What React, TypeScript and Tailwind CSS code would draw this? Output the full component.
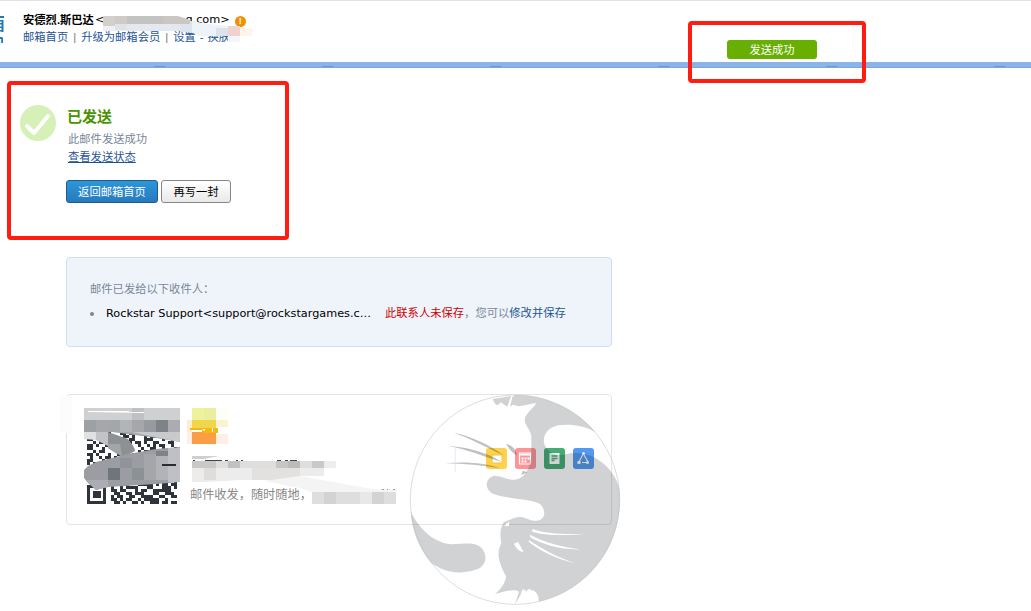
import { Mail } from 'lucide-react';

const QR_CELL = 3;

// rows of the code, 30 modules wide
const QR_ROWS = [
  '110100110111010110110101001011',
  '010110011010110011011010110100',
  '011011010110100110101100110101',
  '110010110011011010100110101101',
  '001101001101011001101011001011',
  '110110101100101101011010110110',
  '111100110001101100001001010100',
  '000110011000110100010110010001',
  '110001000010001100011100010011',
  '001011010011001011010011000110',
  '110100111001100001001010110010',
  '110001001100010000100110010001',
  '001011000011010001011001110010',
  '110100010010010110010110001010',
  '010010110100110010011001010110',
  '110001001101100101000110010101',
  '101101011010110100111001011011',
  '010110110101011011010110110110',
  '110101001001101100111001001101',
  '000000001100001101110011011001',
  '000000000011001100011101001100',
  '000000000110011110010000011011',
  '000000001100010011010111111001',
  '000000000111110001111101011011',
  '000000001001011110001100011101',
  '000000001101100010110011111100',
  '000000000110011011100011001110',
  '000000001011001100111100110011',
  '000000001101011001011111001000',
  '000000000110100110100111011011',
];

function Logo() {
  return (
    <svg className="mt-[4px]" width="5" height="29" viewBox="0 15 5 29" fill="#1e7bb8">
      <path d="M0 16h4v2H0zM0 20h3v1.500H0zM1.500 20h2v12h-2zM0 23h2v1.500H0zM0 26.500h2v1.500H0zM0 30h2v1.500H0z" />
      <path d="M0 37h1.500c1 0 1.500.8 1.500 2v4H1.200v-4H0z" />
    </svg>
  );
}

function HeaderMask() {
  return (
    <svg className="absolute left-[100px] top-[12px]" width="160" height="32" viewBox="100 12 160 32">
      <path d="M103 16h75l12 4v11h-87z" fill="#edf1f6" />
      <path d="M182 22l8-1 28 4 11 1v10h-30l-6-3-11-3z" fill="#edf3f8" />
      <g shapeRendering="crispEdges">
        <path d="M103 16h12v10h-12z" fill="#d3cfcb" />
        <path d="M115 16h12v10h-12z" fill="#cfcac7" />
        <path d="M127 16h36v8h-36z" fill="#c3c3c4" />
        <path d="M115 24h12v6h-12z" fill="#dfe2e6" />
        <path d="M127 24h53v7h-53z" fill="#e5e9ef" />
        <path d="M180 22h12v10h-12z" fill="#dce5ee" />
        <path d="M216 28h12v8h-12z" fill="#dce2ea" />
        <path d="M228 26h12v10h-12z" fill="#f0d3d1" />
        <path d="M228 36h12v6h-12z" fill="#f3f6fa" />
        <path d="M240 28h12v8h-12z" fill="#fff4e9" />
      </g>
      <path d="M163 16h15l12 4v4h-27z" fill="#cbc6c2" />
    </svg>
  );
}

function QrCode() {
  return (
    <svg className="shrink-0" width="96" height="98" viewBox="84 408 96 98">
      <g shapeRendering="crispEdges" fill="#2e333c">
        {QR_ROWS.map((row, y) =>
          row.split('').map((cell, x) =>
            cell === '1' ? (
              <rect key={`${x}-${y}`} x={87 + x * QR_CELL} y={414 + y * QR_CELL} width={QR_CELL} height={QR_CELL} />
            ) : null,
          ),
        )}
        <rect x="88.500" y="486.500" width="16" height="16" fill="none" stroke="#2e333c" strokeWidth="3" />
        <rect x="93" y="491" width="8" height="7" />
      </g>
      <path d="M84 408h96v34l-30-5-38-5-28 2z" fill="#a5a7ab" />
      <g shapeRendering="crispEdges">
        <path d="M84 408h96v12H84z" fill="#cfd0d2" />
        <path d="M132 408h12v12h-12z" fill="#c0c1c3" />
        <path d="M84 420h12v12H84z" fill="#9da0a4" />
        <path d="M108 420h12v12h-12z" fill="#a3a7aa" />
        <path d="M120 420h12v12h-12z" fill="#b2b5b6" />
        <path d="M144 420h12v12h-12z" fill="#979ba0" />
        <path d="M156 420h12v12h-12z" fill="#7e8387" />
        <path d="M168 420h12v12h-12z" fill="#aaacb2" />
      </g>
      <path d="M132 432h48v10l-30-6z" fill="#c9cacc" />
      <path d="M88 411h41v1h15v1l-56-1z" fill="#fff" />
      <path d="M84 432h12v8l-12-1z" fill="#e0e0e0" />
      <path d="M96 432h12v14l-12-6z" fill="#c2c3c5" />
      <path d="M108 432l20 7c4 5 7 9 7 12l-9 5-4 1-14-9z" fill="#8d9194" />
      <path d="M108 444h12l2 12-14-8z" fill="#a2a4a7" />
      <path d="M180 447v35l-24 2-48 3-12 3-8-7-4-5v-8l4-4 8-4 32-8 28-5z" fill="#9b9da2" />
      <g shapeRendering="crispEdges">
        <path d="M108 468h12v12h-12z" fill="#70757c" />
        <path d="M132 468h12v12h-12z" fill="#8c9196" />
        <path d="M120 458h12v10h-12z" fill="#909397" />
        <path d="M144 454h12v26h-12z" fill="#a4a6aa" />
        <path d="M156 456h12v24h-12z" fill="#b1b3b7" />
        <path d="M156 451h12v5h-12z" fill="#7f8388" />
        <path d="M168 448h12v34h-12z" fill="#bfc0c4" />
        <path d="M162 464h14v2h-14z" fill="#292c32" />
      </g>
      <path d="M86 480h22v7l-12 3z" fill="#acadb4" />
    </svg>
  );
}

function PromoMask() {
  return (
    <svg className="absolute left-[120px] top-[8px]" width="212" height="104" viewBox="187 403 212 104">
      <g shapeRendering="crispEdges">
        <path d="M192 408h12v12h-12z" fill="#eff19c" />
        <path d="M204 408h12v12h-12z" fill="#e9ef9e" />
        <path d="M216 408h12v12h-12z" fill="#fdfef5" />
        <path d="M187 420h5v12h-5z" fill="#fcefd0" />
        <path d="M192 420h24v9h-24z" fill="#f1d64b" />
        <path d="M216 420h12v7h-12z" fill="#faf3d2" />
        <path d="M187 432h5v12h-5z" fill="#fdefe4" />
        <path d="M192 432h24v12h-24z" fill="#fb9d46" />
        <path d="M216 434h12v10h-12z" fill="#fdefe4" />
      </g>
      <path d="M190 428h28v5h-16v-3h-12z" fill="#f4b90e" />
      <path d="M196 430h5l-1 2h-4zM202 429h4l-2 2zM212 428h1v4h-1z" fill="#fff" />
      <path d="M192 456h27l-15 3h-12z" fill="#cfcfcf" />
      <path d="M205 460.500h17M193 460.500h2M225 460.500h3M236 460.500h2M241 460.500h2M277 460.500h4M285 460.500h3M290 460.500h7" stroke="#444" strokeWidth="1" />
      <g shapeRendering="crispEdges">
        <path d="M192 461h144v7H192z" fill="#dedede" />
        <path d="M192 461h24v7h-24z" fill="#cbc9c8" />
        <path d="M228 461h12v7h-12z" fill="#c1c1c1" />
        <path d="M276 461h24v7h-24z" fill="#c7c5c5" />
        <path d="M288 461h12v7h-12z" fill="#bdb9b7" />
        <path d="M312 461h12v7h-12z" fill="#c8c9c9" />
        <path d="M324 461h12v7h-12z" fill="#ededef" />
      </g>
      <path d="M192 468h132v8h-24v4h-60l-36 2h-12z" fill="#ececec" />
      <g shapeRendering="crispEdges">
        <path d="M204 468h12v12h-12z" fill="#dedddc" />
        <path d="M252 468h48v12h-48z" fill="#e2e1e0" />
      </g>
      <path d="M300 476l72 13h24v3h-84l-12-4-36-7z" fill="#f4f4f4" />
      <g shapeRendering="crispEdges">
        <path d="M312 492h84v12h-84z" fill="#dedede" />
        <path d="M324 492h12v12h-12z" fill="#d4d3d4" />
        <path d="M360 492h12v12h-12z" fill="#e8e8e8" />
        <path d="M372 492h12v12h-12z" fill="#d4d2d4" />
      </g>
      <path d="M382 489.500h2M387 489.500h1M393 489.500h2" stroke="#8ba0b0" strokeWidth="1" />
    </svg>
  );
}

function AppIcons() {
  return (
    <div className="flex gap-[8px]">
      <span className="flex h-[21px] w-[21px] items-center justify-center rounded-[3px] bg-[#ffd24b]">
        <Mail className="h-[12px] w-[12px] text-white" fill="#fff" stroke="#f0c34b" />
      </span>
      <svg className="rounded-[3px] bg-[#ff9497]" width="21" height="21" viewBox="0 0 21 21">
        <path d="M4.5 5h11v11h-11z" fill="none" stroke="#fff" strokeWidth="1.2" />
        <path d="M4.5 6.5h11" stroke="#fff" strokeWidth="2" />
        <path d="M6.500 10.500h8M6.500 13.500h6" stroke="#fff" strokeWidth="1.8" strokeDasharray="2 1" />
      </svg>
      <svg className="rounded-[3px] bg-[#43ad74]" width="21" height="21" viewBox="0 0 21 21">
        <path d="M5.500 5h10v11h-10z" fill="#fff" />
        <path d="M7.500 8h6M7.500 10.500h6M7.500 12.500h3" stroke="#43ad74" strokeWidth="1.3" />
      </svg>
      <svg className="rounded-[3px] bg-[#529af0]" width="21" height="21" viewBox="0 0 21 21">
        <path d="M10 6L6 14M10.500 6l4.500 8M9 14.500h6" fill="none" stroke="#fff" strokeWidth="1.1" />
        <circle cx="10.500" cy="5.500" r="1.300" fill="#fff" />
        <circle cx="6" cy="14.500" r="1.800" fill="#fff" />
        <circle cx="14.500" cy="14.500" r="1.500" fill="#fff" />
      </svg>
    </div>
  );
}

function CatWatermark() {
  return (
    <svg className="pointer-events-none absolute left-[400px] top-[385px]" width="230" height="226" viewBox="0 0 690 678">
      <g fill="#171c24" fillOpacity="0.2">
        <path d="M345 30A314 314 0 0 1 587 142C553 120 505 116 475 121C438 128 423 161 436 184C447 206 476 216 500 207C574 190 646 248 659 315A314 314 0 0 1 416 650C418 627 402 614 395 616C384 608 384 613 380 621C371 608 364 614 363 627L345 659L357 620C339 610 310 621 285 627C304 612 318 590 318 574C285 513 296 494 304 474C298 445 302 426 312 411C332 404 345 395 365 396C388 402 400 413 421 404C439 395 434 371 421 358C400 341 330 344 281 327C252 314 254 279 283 272C306 272 324 287 345 284C378 281 391 244 394 211L394 154C390 129 370 119 375 100C379 85 394 75 410 54C378 58 364 68 339 59L330 65L337 36Z" />
        <path d="M278 42L333 33L322 65L302 52C291 69 284 57 278 42Z" />
        <path d="M32 380C56 426 92 470 154 478C198 477 225 469 247 491C266 519 255 548 222 556C170 571 128 558 94 534C58 491 36 440 32 380Z" />
      </g>
      <g fill="#171c24" fillOpacity="0.28">
        <path d="M161 143C213 153 270 180 311 211C265 190 214 161 161 143ZM145 183C208 186 273 208 305 231C254 215 197 192 145 183ZM137 235C198 229 262 235 300 250C247 242 193 235 137 235ZM318 177C335 180 348 193 351 211C334 203 327 189 318 177ZM368 257l14 5-18 8z" />
      </g>
      <g fill="#fff">
        <path d="M397 432C435 446 491 449 555 446C498 453 436 452 397 440ZM390 449C433 472 484 486 542 493C481 495 424 477 390 456ZM387 465C432 496 472 516 526 535C468 522 415 494 386 470ZM342 476l12-6 17 32c-14-3-23-12-29-26zM312 423l16-14-1 14z" />
      </g>
      <circle cx="345" cy="344" r="314" fill="none" stroke="#bfc1c3" strokeOpacity=".65" strokeWidth="2.500" />
      <path d="M166 183v78" stroke="#d9e6ef" strokeWidth="2" />
    </svg>
  );
}

export default function App() {
  return (
    <div className="relative h-[611px] w-[1031px] overflow-hidden bg-white font-['Liberation_Sans','Noto_Sans_CJK_SC',sans-serif] text-[11.3px] leading-[18px] text-[#798699]">
      {/* 页头 */}
      <header className="relative flex h-[62px] border-t border-[#e1e1e6] pt-[10px]">
        <div className="w-[23px]">
          <Logo />
        </div>
        <div>
          <div className="flex h-[18px] items-center whitespace-nowrap text-black">
            <b>安德烈.斯巴达</b>
            <span className="ml-px font-['DejaVu_Sans',sans-serif]">&lt;</span>
            <span className="ml-[81px] font-['DejaVu_Sans',sans-serif] text-[11.3px]">g.com&gt;</span>
            <span className="ml-[5px] mt-[2px] flex h-[11px] w-[11px] items-center justify-center rounded-full bg-[#f29100] text-[9px] font-bold text-white">!</span>
          </div>
          <nav className="flex h-[16px] items-center gap-[5px] whitespace-nowrap text-[#1e5494]">
            <span>邮箱首页</span>
            <span className="text-[#777]">|</span>
            <span>升级为邮箱会员</span>
            <span className="text-[#777]">|</span>
            <span className="flex gap-[4px]">
              <span>设置</span>
              <span>-</span>
              <span>换肤</span>
            </span>
          </nav>
        </div>
        <div className="absolute left-[727px] top-[39px] flex h-[19px] w-[90px] items-center justify-center rounded-[3px] bg-[#68af02] text-white">
          发送成功
        </div>
      </header>
      <div className="flex h-[6px] items-end gap-[157px] border-b border-[#7fa7de] bg-[#8ab4e8] pl-[154px]">
        {[0, 1, 2, 3, 4, 5].map((i) => (
          <span key={i} className="h-px w-[11px] shrink-0 bg-[#7198ce]" />
        ))}
      </div>
      <HeaderMask />

      {/* 发送结果 */}
      <main>
        <section className="flex h-[189px] pl-[20px] pt-[37px]">
          <svg width="36" height="36" viewBox="0 0 36 36">
            <circle cx="18" cy="18" r="18" fill="#d5f1b8" />
            <path d="M7 21l7 7L28 11" fill="none" stroke="#fff" strokeWidth="4" strokeLinecap="round" strokeLinejoin="round" />
          </svg>
          <div className="ml-[10px]">
            <h1 className="ml-px h-[25px] text-[15px] font-bold leading-[24px] text-[#4b9200]">已发送</h1>
            <p className="ml-[2px]">此邮件发送成功</p>
            <a className="ml-[2px] block text-[#1e5494] underline">查看发送状态</a>
            <div className="mt-[14px] flex gap-[3px]">
              <button className="h-[23px] w-[92px] rounded-[3px] border border-[#20598a] bg-linear-to-b from-[#2b97d8] to-[#287abd] text-white">返回邮箱首页</button>
              <button className="h-[23px] w-[70px] rounded-[3px] border border-[#868686] bg-linear-to-b from-white to-[#e9e9e9] text-black">再写一封</button>
            </div>
          </div>
        </section>

        {/* 收件人 */}
        <section className="ml-[66px] h-[90px] w-[546px] rounded-[4px] border border-[#d0dff0] bg-[#eff4fb] pl-[23px] pt-[22px]">
          <p>邮件已发给以下收件人：</p>
          <div className="mt-[6px] flex h-[18px] items-center whitespace-nowrap">
            <span className="mt-[2px] h-[4px] w-[4px] rounded-full bg-[#798699]" />
            <span className="ml-[12px] mt-px w-[279px] font-['DejaVu_Sans',sans-serif] text-[11.25px] text-black">Rockstar Support&lt;support@rockstargames.c…</span>
            <span className="text-[#cc0000]">此联系人未保存</span>
            <span>，您可以</span>
            <span className="text-[#1e5494]">修改并保存</span>
          </div>
        </section>

        {/* 客户端推广 */}
        <section className="relative ml-[66px] mt-[47px] flex h-[131px] w-[546px] rounded-[4px] border border-[#e5e5e5] pl-[17px] pt-[13px]">
          <QrCode />
          <div className="w-[306px] pl-[10px] pt-[77px] text-[12.2px] leading-[20px] text-[#888]">邮件收发，随时随地，</div>
          <div className="pt-[40px]">
            <AppIcons />
          </div>
          <PromoMask />
          <div className="absolute left-[-7px] top-[1px] h-[37px] w-[12px] bg-[#fcfcfc]" />
        </section>
      </main>

      <CatWatermark />

      {/* 标注框 */}
      <div className="absolute left-[7px] top-[81px] h-[159px] w-[282px] rounded-[4px] border-4 border-[#ff1d12]" />
      <div className="absolute left-[688px] top-[21px] h-[62px] w-[178px] rounded-[4px] border-4 border-[#ff1d12]" />
    </div>
  );
}
